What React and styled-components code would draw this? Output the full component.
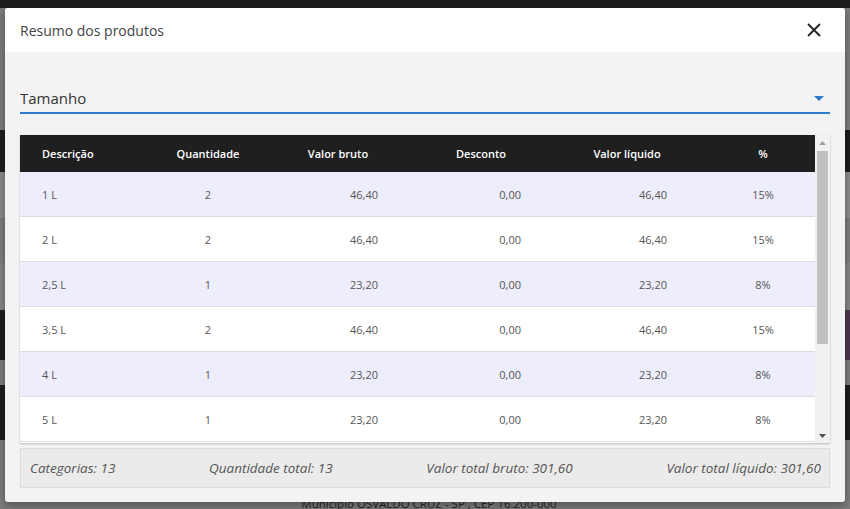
import styled, { createGlobalStyle } from "styled-components";

const GlobalStyle = createGlobalStyle`
    body {
        margin: 0;
        font-family: "Open Sans", "Liberation Sans", sans-serif;
    }
`;

const columns = [
    { key: "desc", label: "Descrição", width: 125, head: "left", cell: "left", pl: 22, pr: 0 },
    { key: "qtd", label: "Quantidade", width: 126, head: "center", cell: "center", pl: 0, pr: 0 },
    { key: "bruto", label: "Valor bruto", width: 134, head: "center", cell: "right", pl: 0, pr: 27 },
    { key: "desconto", label: "Desconto", width: 152, head: "center", cell: "right", pl: 0, pr: 36 },
    { key: "liquido", label: "Valor líquido", width: 140, head: "center", cell: "right", pl: 0, pr: 30 },
    { key: "pct", label: "%", width: 118, head: "center", cell: "center", pl: 14, pr: 0 },
];

const rows = [
    { desc: "1 L", qtd: "2", bruto: "46,40", desconto: "0,00", liquido: "46,40", pct: "15%" },
    { desc: "2 L", qtd: "2", bruto: "46,40", desconto: "0,00", liquido: "46,40", pct: "15%" },
    { desc: "2,5 L", qtd: "1", bruto: "23,20", desconto: "0,00", liquido: "23,20", pct: "8%" },
    { desc: "3,5 L", qtd: "2", bruto: "46,40", desconto: "0,00", liquido: "46,40", pct: "15%" },
    { desc: "4 L", qtd: "1", bruto: "23,20", desconto: "0,00", liquido: "23,20", pct: "8%" },
    { desc: "5 L", qtd: "1", bruto: "23,20", desconto: "0,00", liquido: "23,20", pct: "8%" },
];

const bands = [
    { h: 8, bg: "#1d1d1d", side: "#1d1d1d" },
    { h: 122, bg: "#7c7c7c", side: "#7c7c7c" },
    { h: 42, bg: "#1e1e1e", side: "#1e1e1e" },
    { h: 46, bg: "#8c8c8c", side: "#8c8c8c" },
    { h: 45, bg: "#7d7d7d", side: "#7d7d7d" },
    { h: 47, bg: "#858585", side: "#858585" },
    { h: 50, bg: "#1e1e1e", side: "#4d3550" },
    { h: 25, bg: "#7c7c7c", side: "#7c7c7c" },
    { h: 55, bg: "#1e1e1e", side: "#1e1e1e" },
];

const SummaryModal = () => (
    <Modal>
        <Header>
            <Title>Resumo dos produtos</Title>
            <Close aria-label="Fechar">
                <svg width="14" height="14" viewBox="0 0 14 14">
                    <path d="M1 1L13 13M13 1L1 13" stroke="#222" strokeWidth="1.8" fill="none" />
                </svg>
            </Close>
        </Header>
        <Body>
            <Select>
                <span>Tamanho</span>
                <Caret />
            </Select>
            <TableBox>
                <Viewport>
                    <HeadRow>
                        {columns.map((c) => (
                            <Cell key={c.key} $w={c.width} $align={c.head} $pl={c.pl} $pr={c.head === "center" ? 0 : c.pr}>
                                {c.label}
                            </Cell>
                        ))}
                    </HeadRow>
                    {rows.map((r, i) => (
                        <Row key={r.desc} $odd={i % 2 === 0}>
                            {columns.map((c) => (
                                <Cell key={c.key} $w={c.width} $align={c.cell} $pl={c.pl} $pr={c.pr}>
                                    {r[c.key]}
                                </Cell>
                            ))}
                        </Row>
                    ))}
                </Viewport>
                <ScrollBar>
                    <ArrowBtn>
                        <svg width="7" height="4" viewBox="0 0 7 4">
                            <path d="M0 4L3.5 0L7 4Z" fill="#a3a3a3" />
                        </svg>
                    </ArrowBtn>
                    <Track>
                        <Thumb />
                    </Track>
                    <ArrowBtn>
                        <svg width="7" height="4" viewBox="0 0 7 4">
                            <path d="M0 0L3.5 4L7 0Z" fill="#505050" />
                        </svg>
                    </ArrowBtn>
                </ScrollBar>
            </TableBox>
            <Totals>
                <span>Categorias: 13</span>
                <span>Quantidade total: 13</span>
                <span>Valor total bruto: 301,60</span>
                <span>Valor total líquido: 301,60</span>
            </Totals>
        </Body>
    </Modal>
);

const App = () => (
    <>
        <GlobalStyle />
        <Screen>
            <Page>
                {bands.map((b, i) => (
                    <Band key={i} $h={b.h} $bg={b.bg} $side={b.side} />
                ))}
                <PageFooter>Município OSVALDO CRUZ - SP , CEP 16.200-000</PageFooter>
            </Page>
            <SummaryModal />
        </Screen>
    </>
);

export default App;

const Screen = styled.div`
    position: relative;
    width: 850px;
    height: 509px;
    overflow: hidden;
    background-color: #7c7c7c;
`;

const Page = styled.div`
    display: flex;
    flex-direction: column;
    height: 100%;
`;

const Band = styled.div`
    height: ${({ $h }) => $h}px;
    flex-shrink: 0;
    background: linear-gradient(to right, ${({ $bg }) => $bg} 0 800px, ${({ $side }) => $side} 800px);
`;

const PageFooter = styled.div`
    flex: 1;
    display: flex;
    justify-content: center;
    align-items: flex-end;
    padding-left: 8px;
    font-size: 11.5px;
    line-height: 12px;
    color: #222;
    margin-bottom: -1px;
`;

const Modal = styled.section`
    position: absolute;
    left: 5px;
    top: 8px;
    width: 840px;
    height: 494px;
    display: flex;
    flex-direction: column;
    background-color: #f3f3f3;
    border-radius: 3px;
    box-shadow: 0 3px 10px rgba(0, 0, 0, 0.35);
    overflow: hidden;
`;

const Header = styled.header`
    height: 44px;
    flex-shrink: 0;
    display: flex;
    align-items: center;
    justify-content: space-between;
    padding: 0 24px 0 15px;
    background-color: #fff;
`;

const Title = styled.h2`
    margin: 0;
    font-size: 14px;
    font-weight: 400;
    color: #444;
`;

const Close = styled.button`
    display: flex;
    padding: 0;
    border: 0;
    background: none;
    cursor: pointer;
`;

const Body = styled.div`
    display: flex;
    flex-direction: column;
    padding: 28px 15px 0;
`;

const Select = styled.div`
    height: 28px;
    display: flex;
    align-items: center;
    justify-content: space-between;
    padding: 4px 6px 0 0;
    border-bottom: 2px solid #2f7bcb;
    font-size: 15px;
    color: #333;
`;

const Caret = styled.span`
    width: 0;
    height: 0;
    border-left: 5px solid transparent;
    border-right: 5px solid transparent;
    border-top: 5px solid #2f7bcb;
`;

const TableBox = styled.div`
    display: flex;
    height: 308px;
    margin-top: 21px;
    background-color: #fff;
    box-shadow: 0 1px 2px rgba(0, 0, 0, 0.25);
`;

const Viewport = styled.div`
    width: 795px;
    overflow: hidden;
`;

const HeadRow = styled.div`
    display: flex;
    height: 37px;
    align-items: center;
    background-color: #1f1f1f;
    color: #fff;
    font-size: 11px;
    font-weight: 600;
`;

const Row = styled.div`
    display: flex;
    height: 44px;
    align-items: center;
    border-bottom: 1px solid #dedede;
    background-color: ${({ $odd }) => ($odd ? "#eeedfb" : "#fff")};
    color: #555;
    font-size: 11px;
`;

const Cell = styled.div`
    width: ${({ $w }) => $w}px;
    flex-shrink: 0;
    box-sizing: border-box;
    text-align: ${({ $align }) => $align};
    padding-left: ${({ $pl }) => $pl}px;
    padding-right: ${({ $pr }) => $pr}px;
`;

const ScrollBar = styled.div`
    width: 15px;
    display: flex;
    flex-direction: column;
    background-color: #f1f1f1;
`;

const ArrowBtn = styled.div`
    height: 15px;
    display: flex;
    align-items: center;
    justify-content: center;
`;

const Track = styled.div`
    flex: 1;
    padding: 1px 2px;
`;

const Thumb = styled.div`
    height: 193px;
    background-color: #c1c1c1;
`;

const Totals = styled.footer`
    height: 38px;
    margin-top: 5px;
    display: flex;
    align-items: center;
    justify-content: space-between;
    padding: 0 8px 0 9px;
    background-color: #ebebeb;
    border: 1px solid #dcdcdc;
    font-size: 13.5px;
    font-style: italic;
    color: #555;
`;
